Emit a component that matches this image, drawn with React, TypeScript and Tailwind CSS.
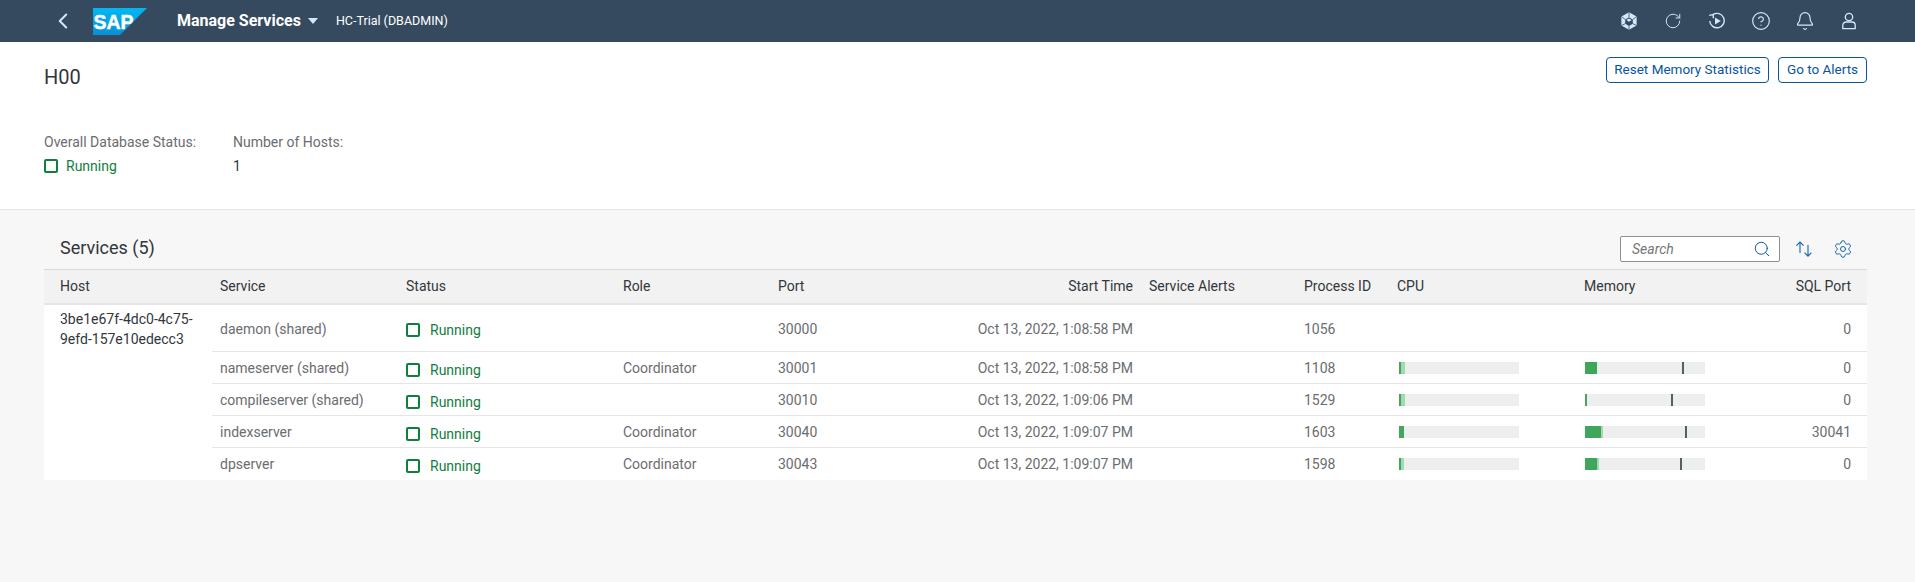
import type { ReactNode } from 'react'
import { Bell, ChevronLeft, CircleHelp, RotateCw, Search, Settings } from 'lucide-react'

const FONT = "font-['Roboto',sans-serif]"

interface Bar {
  used: number
  extra: number
  marker?: number
}

interface Row {
  service: string
  role: string
  port: string
  start: string
  pid: string
  sql: string
  cpu?: Bar
  mem?: Bar
}

const rows: Row[] = [
  { service: 'daemon (shared)', role: '', port: '30000', start: 'Oct 13, 2022, 1:08:58 PM', pid: '1056', sql: '0' },
  { service: 'nameserver (shared)', role: 'Coordinator', port: '30001', start: 'Oct 13, 2022, 1:08:58 PM', pid: '1108', sql: '0', cpu: { used: 2, extra: 4 }, mem: { used: 12, extra: 0, marker: 97 } },
  { service: 'compileserver (shared)', role: '', port: '30010', start: 'Oct 13, 2022, 1:09:06 PM', pid: '1529', sql: '0', cpu: { used: 2, extra: 4 }, mem: { used: 2, extra: 0, marker: 86 } },
  { service: 'indexserver', role: 'Coordinator', port: '30040', start: 'Oct 13, 2022, 1:09:07 PM', pid: '1603', sql: '30041', cpu: { used: 5, extra: 0 }, mem: { used: 16, extra: 2, marker: 100 } },
  { service: 'dpserver', role: 'Coordinator', port: '30043', start: 'Oct 13, 2022, 1:09:07 PM', pid: '1598', sql: '0', cpu: { used: 2, extra: 3 }, mem: { used: 12, extra: 2, marker: 95 } },
]

function SapLogo() {
  return (
    <svg width="54" height="27" viewBox="0 0 54 27" className="shrink-0">
      <defs>
        <linearGradient id="sapBlue" x1="0" y1="0" x2="0" y2="1">
          <stop offset="0" stopColor="#00b8f1" />
          <stop offset="1" stopColor="#0a8fd6" />
        </linearGradient>
      </defs>
      <polygon points="0,0 54,0 27,27 0,27" fill="url(#sapBlue)" />
      <text x="0.5" y="20.5" fontFamily="'Liberation Sans', sans-serif" fontWeight="700" fontSize="21" fill="#fff" stroke="#fff" strokeWidth="0.5" textLength="40" lengthAdjust="spacingAndGlyphs">SAP</text>
    </svg>
  )
}

function CubeIcon() {
  return (
    <svg width="18" height="18" viewBox="0 0 16 16" fill="#d1e8ff" className="shrink-0">
      <path d="M8 0.3 14.8 4V12L8 15.7 1.2 12V4Z" />
      <path d="M8 4.6 11.4 6.6V10.4L8 12.4 4.6 10.4V6.6Z" fill="#354a5f" />
      <path d="M8 5.8 10.4 7.2 8 8.6 5.6 7.2Z" />
      <path d="M1.2 4 4.6 6.6M14.8 4 11.4 6.6M1.2 12 4.6 10.4M14.8 12 11.4 10.4M8 12.4V15.7M8 0.3V4.6" stroke="#354a5f" strokeWidth="0.7" />
    </svg>
  )
}

function ReplayIcon() {
  return (
    <svg width="18" height="18" viewBox="0 0 18 18" fill="none" stroke="#d1e8ff" strokeWidth="1.4" className="shrink-0">
      <path d="M5 2.6A7.2 7.2 0 1 1 1.8 9" />
      <path d="M1.2 3.4 5.1 2.5 5.4 6.2" />
      <path d="M7 5.4 12.8 9 7 12.6Z" fill="#d1e8ff" stroke="none" />
    </svg>
  )
}

function PersonIcon() {
  return (
    <svg width="18" height="18" viewBox="0 0 18 18" fill="none" stroke="#d1e8ff" strokeWidth="1.3" className="shrink-0">
      <circle cx="9" cy="5" r="3.7" />
      <path d="M2.8 16.6V13.2A3.2 3.2 0 0 1 6 10H12A3.2 3.2 0 0 1 15.2 13.2V16.6Z" />
    </svg>
  )
}

function SortIcon() {
  return (
    <svg width="18" height="16" viewBox="0 0 18 16" fill="none" stroke="#1565ad" strokeWidth="1.1" className="shrink-0">
      <path d="M5 12V1.2M1.4 4.6 5 1 8.6 4.6" />
      <path d="M13 4V15M9.6 11.6 13 15.2 16.4 11.6" />
    </svg>
  )
}

function ShellSlot({ children }: { children: ReactNode }) {
  return <div className="flex h-[42px] w-[44px] items-center justify-center">{children}</div>
}

function StatusCell({ className = '' }: { className?: string }) {
  return (
    <span className={`flex items-center text-[#107e3e] ${className}`}>
      <span className="h-[14px] w-[14px] shrink-0 rounded-[2px] border-2 border-[#107e3e]" />
      Running
    </span>
  )
}

function UsageBar({ bar }: { bar?: Bar }) {
  if (!bar) return null
  return (
    <div className="relative flex h-3 w-[120px] bg-[#edefef]">
      <div className="bg-[#3fa65a]" style={{ width: bar.used }} />
      <div className="bg-[#a5d8b2]" style={{ width: bar.extra }} />
      {bar.marker !== undefined && (
        <div className="absolute top-0 h-3 w-[2px] bg-[#515f6b]" style={{ left: bar.marker }} />
      )}
    </div>
  )
}

const th = 'px-2 text-left font-normal text-[#32363a]'
const td = 'px-2 align-middle text-[#6a6d70]'

export default function App() {
  return (
    <div className={`flex h-[582px] w-[1915px] flex-col overflow-hidden bg-[#f7f7f7] text-sm ${FONT}`}>
      {/* Shell bar */}
      <header className="flex h-[42px] shrink-0 items-center bg-[#354a5f] pl-[50px] pr-[44px] text-white">
        <ChevronLeft size={26} strokeWidth={1.8} color="#d1e8ff" />
        <div className="ml-[17px]">
          <SapLogo />
        </div>
        <span className="ml-[30px] text-[16px] font-bold">Manage Services</span>
        <svg width="10" height="6" viewBox="0 0 10 6" className="ml-[7px]">
          <polygon points="0,0 10,0 5,6" fill="#d1e8ff" />
        </svg>
        <span className="ml-[18px] text-[12.5px]">HC-Trial (DBADMIN)</span>
        <div className="ml-auto flex items-center">
          <ShellSlot><CubeIcon /></ShellSlot>
          <ShellSlot><RotateCw size={18} strokeWidth={1.3} color="#d1e8ff" /></ShellSlot>
          <ShellSlot><ReplayIcon /></ShellSlot>
          <ShellSlot><CircleHelp size={20} strokeWidth={1.4} color="#d1e8ff" /></ShellSlot>
          <ShellSlot><Bell size={20} strokeWidth={1.4} color="#d1e8ff" /></ShellSlot>
          <ShellSlot><PersonIcon /></ShellSlot>
        </div>
      </header>

      {/* Object header */}
      <section className="flex h-[168px] shrink-0 flex-col border-b border-[#e5e5e5] bg-white px-[44px] pt-[15px] pr-[48px]">
        <div className="flex items-start justify-between">
          <h1 className="mt-[6px] text-[20px] leading-[28px] text-[#32363a]">H00</h1>
          <div className="flex gap-[9px]">
            <button className="h-[26px] w-[163px] rounded-[4px] border border-[#0854a0] text-[13.5px] text-[#0854a0]">Reset Memory Statistics</button>
            <button className="h-[26px] w-[89px] rounded-[4px] border border-[#0854a0] text-[13.5px] text-[#0854a0]">Go to Alerts</button>
          </div>
        </div>
        <div className="mt-[41px] flex">
          <div className="w-[189px]">
            <div className="text-[#6a6d70]">Overall Database Status:</div>
            <StatusCell className="mt-[4px] gap-2" />
          </div>
          <div>
            <div className="text-[#6a6d70]">Number of Hosts:</div>
            <div className="mt-[4px] text-[#32363a]">1</div>
          </div>
        </div>
      </section>

      {/* Services table */}
      <section className="ml-[44px] w-[1823px]">
        <div className="flex h-[59px] items-center pl-4 pt-[16px]">
          <h2 className="text-[18px] text-[#32363a]">Services (5)</h2>
          <div className="ml-auto mt-[2px] flex items-center">
            <div className="flex h-[26px] w-[160px] items-center justify-between rounded-[2px] border border-[#89919a] bg-white pl-[11px] pr-[8px]">
              <span className="text-[14px] italic text-[#74777a]">Search</span>
              <Search size={18} strokeWidth={1.3} color="#0854a0" />
            </div>
            <div className="ml-[15px]">
              <SortIcon />
            </div>
            <div className="ml-[20px] mr-[14px]">
              <Settings size={20} strokeWidth={1.2} color="#1565ad" />
            </div>
          </div>
        </div>
        <table className="w-full table-fixed border-collapse">
          <colgroup>
            <col className="w-[168px]" />
            <col className="w-[186px]" />
            <col className="w-[217px]" />
            <col className="w-[155px]" />
            <col className="w-[190px]" />
            <col className="w-[181px]" />
            <col className="w-[155px]" />
            <col className="w-[95px]" />
            <col className="w-[186px]" />
            <col className="w-[143px]" />
            <col className="w-[147px]" />
          </colgroup>
          <thead>
            <tr className="h-[34px] border-t border-b-2 border-t-[#d9d9d9] border-b-[#e5e5e5] bg-[#f2f2f2]">
              <th className={`${th} pl-4`}>Host</th>
              <th className={th}>Service</th>
              <th className={th}>Status</th>
              <th className={th}>Role</th>
              <th className={th}>Port</th>
              <th className={`${th} text-right`}>Start Time</th>
              <th className={th}>Service Alerts</th>
              <th className={th}>Process ID</th>
              <th className={`${th} pl-[6px]`}>CPU</th>
              <th className={`${th} pl-[7px]`}>Memory</th>
              <th className={`${th} pr-4 text-right`}>SQL Port</th>
            </tr>
          </thead>
          <tbody className="bg-white">
            {rows.map((row, i) => {
              const rule = i > 0 ? 'border-t border-[#e5e5e5]' : 'pt-[2px]'
              return (
                <tr key={row.service} className={i === 0 ? 'h-[48px]' : 'h-[32px]'}>
                  {i === 0 && (
                    <td rowSpan={rows.length} className="pl-4 pr-2 pt-[4px] align-top leading-[20px] text-[#32363a]">
                      3be1e67f-4dc0-4c75-
                      <br />
                      9efd-157e10edecc3
                    </td>
                  )}
                  <td className={`${td} ${rule}`}>{row.service}</td>
                  <td className={`${td} ${rule}`}><StatusCell className={`gap-[10px] ${i === 0 ? 'pt-[3px]' : 'pt-[4px]'}`} /></td>
                  <td className={`${td} ${rule}`}>{row.role}</td>
                  <td className={`${td} ${rule}`}>{row.port}</td>
                  <td className={`${td} text-right ${rule}`}>{row.start}</td>
                  <td className={`${td} ${rule}`} />
                  <td className={`${td} ${rule}`}>{row.pid}</td>
                  <td className={`${td} ${rule}`}><UsageBar bar={row.cpu} /></td>
                  <td className={`${td} ${rule}`}><UsageBar bar={row.mem} /></td>
                  <td className={`${td} pr-4 text-right ${rule}`}>{row.sql}</td>
                </tr>
              )
            })}
          </tbody>
        </table>
      </section>
    </div>
  )
}
